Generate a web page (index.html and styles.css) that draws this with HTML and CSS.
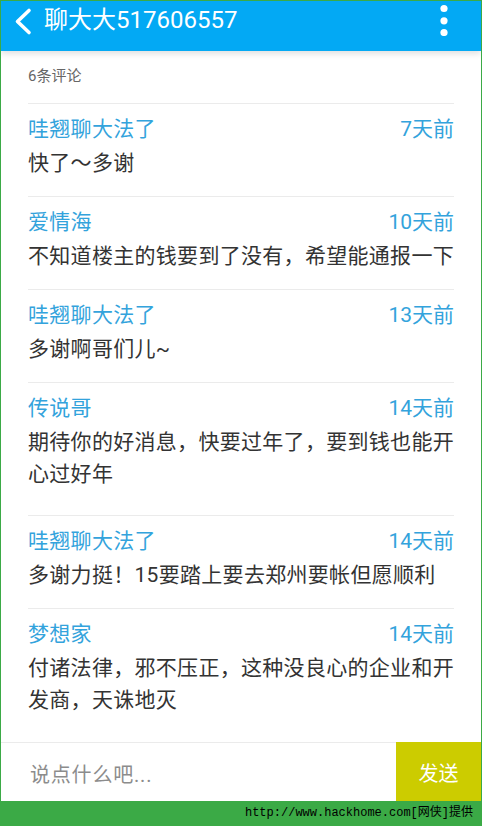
FILE: index.html
```html
<!DOCTYPE html>
<html lang="zh-CN">
  <head>
    <meta charset="UTF-8" />
    <meta name="viewport" content="width=device-width, initial-scale=1.0" />
    <title>聊大大517606557</title>
    <link rel="stylesheet" href="styles.css">
  </head>
  <body>
    <div class="screen">
      <!-- 顶部标题栏 -->
      <div class="header">
        <svg class="back" width="20" height="30" viewBox="0 0 20 30">
          <polyline points="15,4.5 3.5,15.5 15,26.5" fill="none" stroke="#fff" stroke-width="3.6" stroke-linecap="round" stroke-linejoin="round" />
        </svg>
        <span class="title">聊大大517606557</span>
        <svg class="more" width="10" height="34" viewBox="0 0 10 34">
          <circle cx="5" cy="6.5" r="3.6" fill="#fff" />
          <circle cx="5" cy="18.8" r="3.6" fill="#fff" />
          <circle cx="5" cy="30.5" r="3.6" fill="#fff" />
        </svg>
      </div>

      <!-- 评论列表 -->
      <div class="content">
        <div class="count">6条评论</div>

        <div class="comment">
          <div class="comment-head">
            <span class="name">哇翘聊大法了</span>
            <span class="time">7天前</span>
          </div>
          <div class="text">快了～多谢</div>
        </div>

        <div class="comment">
          <div class="comment-head">
            <span class="name">爱情海</span>
            <span class="time">10天前</span>
          </div>
          <div class="text">不知道楼主的钱要到了没有，希望能通报一下</div>
        </div>

        <div class="comment">
          <div class="comment-head">
            <span class="name">哇翘聊大法了</span>
            <span class="time">13天前</span>
          </div>
          <div class="text">多谢啊哥们儿~</div>
        </div>

        <div class="comment comment-long">
          <div class="comment-head">
            <span class="name">传说哥</span>
            <span class="time">14天前</span>
          </div>
          <div class="text">期待你的好消息，快要过年了，要到钱也能开心过好年</div>
        </div>

        <div class="comment">
          <div class="comment-head">
            <span class="name">哇翘聊大法了</span>
            <span class="time">14天前</span>
          </div>
          <div class="text">多谢力挺！15要踏上要去郑州要帐但愿顺利</div>
        </div>

        <div class="comment comment-long">
          <div class="comment-head">
            <span class="name">梦想家</span>
            <span class="time">14天前</span>
          </div>
          <div class="text">付诸法律，邪不压正，这种没良心的企业和开发商，天诛地灭</div>
        </div>
      </div>

      <!-- 底部输入框 -->
      <div class="input-bar">
        <div class="input">说点什么吧...</div>
        <div class="send">发送</div>
      </div>

      <div class="footer">http://www.hackhome.com[网侠]提供</div>
    </div>
  </body>
</html>
```

FILE: styles.css
```css
/* 基本页面样式 */
body {
  margin: 0;
  font-family: 'Roboto', 'Noto Sans CJK SC', sans-serif;
  background-color: #fff;
  color: #333;
}

.screen {
  width: 482px;
  height: 826px;
  box-sizing: border-box;
  border: 1px solid #3baa46;
  border-bottom: none;
  display: flex;
  flex-direction: column;
  overflow: hidden;
}

/* 顶部标题栏 */
.header {
  height: 50px;
  flex-shrink: 0;
  background-color: #03a9f4;
  display: flex;
  align-items: flex-start;
  box-shadow: 0 3px 6px rgba(0, 0, 0, 0.12);
  position: relative;
  z-index: 1;
}

.header .back {
  margin: 5px 0 0 13px;
}

.header .title {
  margin: 5px 0 0 10px;
  font-size: 24px;
  line-height: 28px;
  color: #fff;
  flex: 1;
}

.header .more {
  margin: 1px 32px 0 0;
}

/* 评论列表 */
.content {
  flex: 1;
  padding: 0 27px;
  background: #fff;
}

.count {
  padding: 14px 0 16px;
  font-size: 15px;
  line-height: 22px;
  color: #666;
}

.comment {
  border-top: 1px solid #ebebeb;
  padding: 11px 0 17px;
}

.comment-long {
  padding-bottom: 25px;
}

.comment-head {
  display: flex;
  justify-content: space-between;
  font-size: 21px;
  line-height: 28px;
  color: #33a3dc;
}

.comment-head .name {
  letter-spacing: 0.3px;
}

.comment .text {
  margin-top: 4px;
  font-size: 21px;
  line-height: 32px;
  letter-spacing: 0.3px;
  color: #333;
}

/* 底部输入框 */
.input-bar {
  height: 59px;
  flex-shrink: 0;
  display: flex;
}

.input-bar .input {
  flex: 1;
  border-top: 1px solid #ebebeb;
  padding-left: 29px;
  font-size: 20px;
  line-height: 64px;
  letter-spacing: 0.8px;
  color: #8c8c8c;
  overflow: hidden;
}

.input-bar .send {
  width: 85px;
  background-color: #cccc00;
  color: #fff;
  font-size: 20px;
  line-height: 64px;
  text-align: center;
}

.footer {
  height: 25px;
  margin: 0 -1px;
  background-color: #3baa46;
  font-family: 'Liberation Mono', 'Noto Sans CJK SC', monospace;
  font-size: 12px;
  line-height: 25px;
  color: #000;
  text-align: right;
  padding-right: 9px;
}
```
